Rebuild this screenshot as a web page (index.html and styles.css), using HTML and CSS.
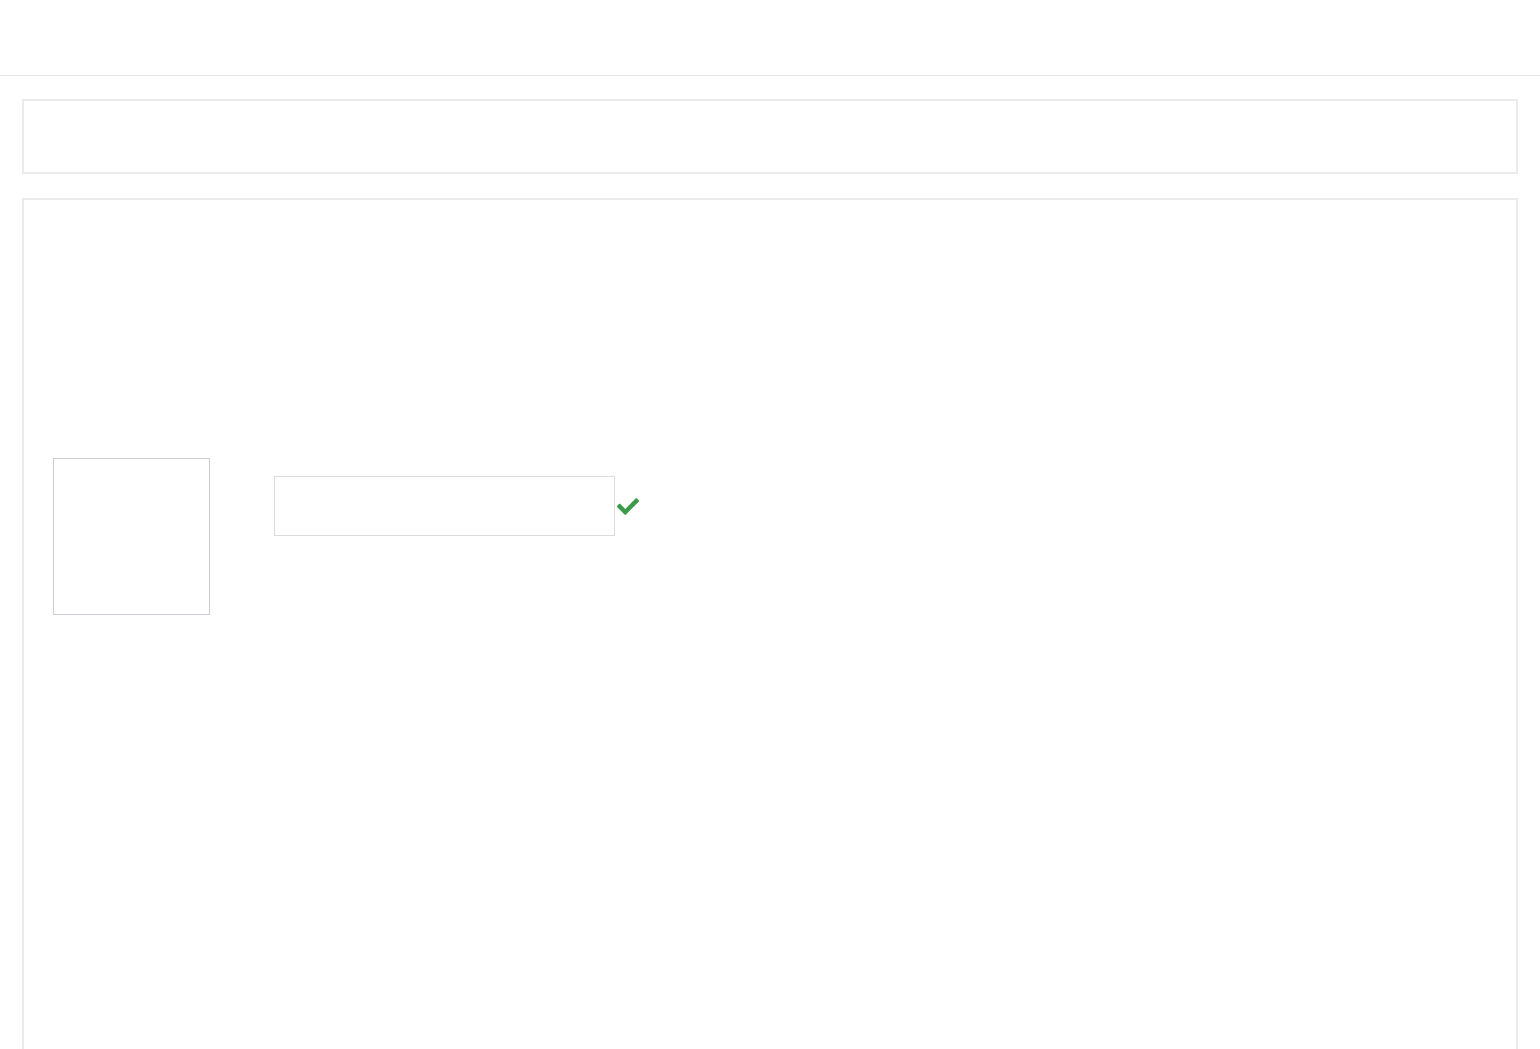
FILE: index.html
```html
<!DOCTYPE html>
<html lang="en">
  <head>
    <meta charset="UTF-8" />
    <meta name="viewport" content="width=device-width, initial-scale=1.0" />
    <title>Document</title>
    <link rel="stylesheet" href="styles.css">
  </head>
  <body>
    <header class="topbar"></header>
    <div class="page">
      <div class="panel toolbar"></div>
      <div class="panel content">
        <div class="row">
          <div class="avatar"></div>
          <div class="field">
            <input class="name-input" type="text" />
            <svg class="check" viewBox="0 64 512 384" width="22" height="17" aria-hidden="true">
              <path fill="#3d9a4a" d="M173.9 439.4L7.5 273c-10-10-10-26.2 0-36.2l36.2-36.2c10-10 26.2-10 36.2 0L192 312.7 432.1 72.6c10-10 26.2-10 36.2 0l36.2 36.2c10 10 10 26.2 0 36.2L210.1 439.4c-10 10-26.2 10-36.2 0z"/>
            </svg>
          </div>
        </div>
      </div>
    </div>
  </body>
</html>
```

FILE: styles.css
```css
body {
  margin: 0;
  padding: 0;
  background: #fff;
  font-family: "Liberation Sans", Arial, sans-serif;
  color: #333;
}
.topbar {
  height: 75px;
  border-bottom: 1px solid #e6e6e6;
}
.page {
  padding: 23px 22px 0;
}
.panel {
  border: 2px solid #ebebeb;
  box-sizing: border-box;
}
.toolbar {
  height: 75px;
}
.content {
  margin-top: 24px;
  min-height: 900px;
  padding: 258px 29px 0;
}
.row {
  display: flex;
  align-items: flex-start;
  gap: 64px;
}
.avatar {
  width: 157px;
  height: 157px;
  box-sizing: border-box;
  border: 1px solid #c9cdd4;
}
.field {
  display: flex;
  align-items: center;
  margin-top: 18px;
  gap: 2px;
}
.name-input {
  width: 341px;
  height: 60px;
  box-sizing: border-box;
  border: 1px solid #dcdcdc;
  margin: 0;
  padding: 0 10px;
  font-size: 14px;
  outline: none;
}
.check {
  display: block;
}
```
